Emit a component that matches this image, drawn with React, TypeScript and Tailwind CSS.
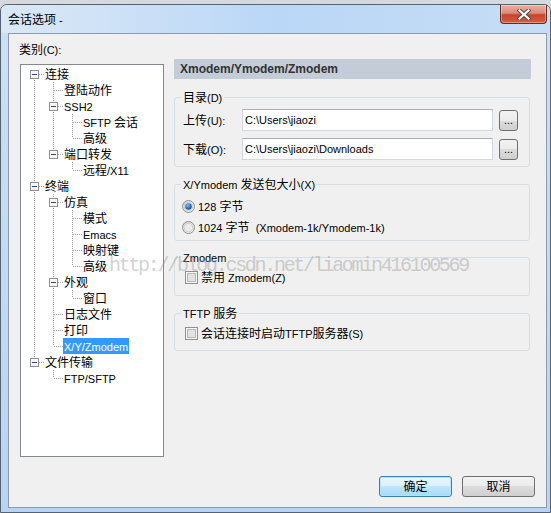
import React from 'react';

type Item = { label: string; depth: number; open?: boolean; selected?: boolean };

const tree: Item[] = [
  { label: '连接', depth: 0, open: true },
  { label: '登陆动作', depth: 1 },
  { label: 'SSH2', depth: 1, open: true },
  { label: 'SFTP 会话', depth: 2 },
  { label: '高级', depth: 2 },
  { label: '端口转发', depth: 1, open: true },
  { label: '远程/X11', depth: 2 },
  { label: '终端', depth: 0, open: true },
  { label: '仿真', depth: 1, open: true },
  { label: '模式', depth: 2 },
  { label: 'Emacs', depth: 2 },
  { label: '映射键', depth: 2 },
  { label: '高级', depth: 2 },
  { label: '外观', depth: 1, open: true },
  { label: '窗口', depth: 2 },
  { label: '日志文件', depth: 1 },
  { label: '打印', depth: 1 },
  { label: 'X/Y/Zmodem', depth: 1, selected: true },
  { label: '文件传输', depth: 0, open: true },
  { label: 'FTP/SFTP', depth: 1 },
];

const hasNext = (i: number) => {
  const d = tree[i].depth;
  for (let j = i + 1; j < tree.length; j++) {
    if (tree[j].depth < d) return false;
    if (tree[j].depth === d) return true;
  }
  return false;
};

// CJK runs at 12px, latin runs a bit smaller like the Windows UI font
const Txt = ({ s }: { s: string }) => (
  <span>
    {s
      .split(/([\u3000-\u9fff\uff00-\uffef]+)/)
      .filter(Boolean)
      .map((p, i) =>
        /[\u3000-\u9fff\uff00-\uffef]/.test(p) ? (
          <span key={i} className="text-[12px]">
            {p}
          </span>
        ) : (
          <span key={i} className="text-[11px]">
            {p}
          </span>
        )
      )}
  </span>
);

type ColProps = { up: boolean; down: boolean; elbow: boolean; box: boolean };

const Col = ({ up, down, elbow, box }: ColProps) => (
  <svg width="19" height="16" className="block shrink-0">
    {up && <line x1="9.5" y1="0" x2="9.5" y2="8" stroke="#a0a0a0" strokeDasharray="1 1" />}
    {down && <line x1="9.5" y1="8" x2="9.5" y2="16" stroke="#a0a0a0" strokeDasharray="1 1" />}
    {elbow && <line x1="10" y1="8.5" x2="19" y2="8.5" stroke="#a0a0a0" strokeDasharray="1 1" />}
    {box && (
      <g>
        <rect x="5.5" y="4.5" width="8" height="8" fill="#f7f7f7" stroke="#919191" />
        <line x1="7" y1="8.5" x2="12" y2="8.5" stroke="#2b4a8a" />
      </g>
    )}
  </svg>
);

const Tree = () => (
  <div className="mt-[6px] w-[144px] h-[393px] border border-[#828790] bg-white pt-[1px] pl-[4px]">
    {tree.map((n, i) => {
      const cols: ColProps[] = [];
      for (let k = 0; k < n.depth; k++) {
        let j = i - 1;
        while (tree[j].depth !== k) j--;
        const cont = hasNext(j);
        cols.push({ up: cont, down: cont, elbow: false, box: false });
      }
      cols.push({ up: i !== 0, down: hasNext(i), elbow: true, box: !!n.open });
      return (
        <div key={i} className="flex h-[16px] items-center">
          {cols.map((c, k) => (
            <Col key={k} {...c} />
          ))}
          <span
            className={
              n.selected
                ? 'h-[16px] px-[1px] leading-[16px] whitespace-nowrap bg-[#3399ff] text-white'
                : 'h-[16px] px-[1px] leading-[16px] whitespace-nowrap'
            }
          >
            <Txt s={n.label} />
          </span>
        </div>
      );
    })}
  </div>
);

const Radio = ({ checked }: { checked?: boolean }) => (
  <svg width="13" height="13" className="block shrink-0">
    <defs>
      <radialGradient id="rdot" cx="40%" cy="35%" r="70%">
        <stop offset="0%" stopColor="#8cc2f0" />
        <stop offset="60%" stopColor="#2e6fb8" />
        <stop offset="100%" stopColor="#1c4f8f" />
      </radialGradient>
      <linearGradient id="rbg" x1="0" y1="0" x2="1" y2="1">
        <stop offset="0%" stopColor="#d6d6d6" />
        <stop offset="100%" stopColor="#fbfbfb" />
      </linearGradient>
    </defs>
    <circle cx="6.5" cy="6.5" r="6" fill="url(#rbg)" stroke="#8e8f8f" />
    <circle cx="6.5" cy="6.5" r="4.3" fill="#ececec" stroke="#c4c4c4" strokeWidth="0.8" />
    {checked && <circle cx="6.5" cy="6.5" r="3.3" fill="url(#rdot)" />}
  </svg>
);

const Check = () => (
  <svg width="13" height="13" className="block shrink-0">
    <rect x="0.5" y="0.5" width="12" height="12" fill="#f6f6f6" stroke="#8e8f8f" />
    <rect x="2.5" y="2.5" width="8" height="8" fill="#e2e2e2" stroke="#b8b8b8" />
  </svg>
);

const PathRow = ({ label, value }: { label: string; value: string }) => (
  <div className="flex items-center">
    <div className="w-[59px] leading-[16px] whitespace-nowrap">
      <Txt s={label} />
    </div>
    <div className="flex h-[22px] w-[251px] items-center border border-[#d3d8de] border-t-[#abadb3] bg-white pl-[2px] text-[11px] whitespace-nowrap">
      {value}
    </div>
    <button className="ml-[6px] flex h-[21px] w-[19px] items-end justify-center rounded-[3px] border border-[#707070] bg-[linear-gradient(#f2f2f2_0%,#ebebeb_50%,#dddddd_50%,#cfcfcf_100%)] pb-[4px] text-[11px] leading-none">
      ...
    </button>
  </div>
);

const Group = ({ title, className, children }: { title: string; className: string; children: React.ReactNode }) => (
  <fieldset className={'rounded-[3px] border border-[#d5dfe5] ' + className}>
    <legend className="ml-[6px] px-[2px] leading-[16px] whitespace-nowrap">
      <Txt s={title} />
    </legend>
    {children}
  </fieldset>
);

export default function App() {
  return (
    <div className="relative h-[513px] w-[551px] overflow-hidden bg-[#d5d8dc] pt-[4px] font-['Liberation_Sans','Noto_Sans_CJK_SC',sans-serif] text-black [text-autospace:no-autospace]">
      <div className="flex h-[509px] flex-col rounded-t-[7px] border border-[#56626f] bg-gradient-to-b from-[#cde0f5] to-[#b8d4f2]">
        {/* title bar */}
        <div className="flex h-[28px] shrink-0 justify-between rounded-t-[6px] bg-gradient-to-r from-[#dbe8f6] via-[#bad7f7] to-[#c6ddf5]">
          <div className="pl-[7px] pt-[6px] leading-[16px]">
            <Txt s="会话选项 -" />
          </div>
          <div className="mr-[3px] flex h-[19px] w-[47px] items-center justify-center rounded-b-[4px] border border-t-0 border-[#6b2a20] bg-[linear-gradient(#eab0a2_0%,#dc8a76_45%,#c8442b_55%,#d4603f_100%)] shadow-[inset_0_0_0_1px_rgba(255,255,255,0.35)]">
            <svg width="14" height="11" viewBox="0 0 14 11">
              <path d="M2.5 1.5 L11.5 9.5 M11.5 1.5 L2.5 9.5" stroke="#4a4a4a" strokeWidth="4" strokeLinecap="square" />
              <path d="M2.5 1.5 L11.5 9.5 M11.5 1.5 L2.5 9.5" stroke="#ffffff" strokeWidth="2.2" strokeLinecap="square" />
            </svg>
          </div>
        </div>

        {/* client area */}
        <div className="ml-[7px] flex h-[475px] w-[539px] flex-col border border-[#8a9bb0] bg-[#f0f0f0] pl-[11px] pt-[7px]">
          <div className="flex">
            <div className="flex flex-col">
              <div className="-ml-[1px] leading-[16px]">
                <Txt s="类别(C):" />
              </div>
              <Tree />
            </div>

            <div className="ml-[10px] mt-[18px] flex w-[357px] flex-col">
              <div className="h-[20px] bg-[#c4cdd7] pl-[6px] text-[12px] font-bold leading-[20px] text-[#333]">
                Xmodem/Ymodem/Zmodem
              </div>

              <Group title="目录(D)" className="mt-[10px] w-[356px]">
                <div className="flex flex-col gap-[7px] pb-[6px] pl-[8px] pr-[11px] pt-[3px]">
                  <PathRow label="上传(U):" value={'C:\\Users\\jiaozi'} />
                  <PathRow label="下载(O):" value={'C:\\Users\\jiaozi\\Downloads'} />
                </div>
              </Group>

              <Group title="X/Ymodem 发送包大小(X)" className="mt-[9px] w-[356px]">
                <div className="flex flex-col gap-[5px] pb-[5px] pl-[7px] pt-[5px]">
                  <div className="flex h-[16px] items-center gap-[3px] leading-[16px]">
                    <Radio checked />
                    <Txt s="128 字节" />
                  </div>
                  <div className="flex h-[16px] items-center gap-[3px] leading-[16px] whitespace-pre">
                    <Radio />
                    <Txt s="1024 字节  (Xmodem-1k/Ymodem-1k)" />
                  </div>
                </div>
              </Group>

              <Group title="Zmodem" className="mt-[8px] w-[356px]">
                <div className="pb-[10px] pl-[10px] pt-[3px]">
                  <div className="flex h-[16px] items-center gap-[3px] leading-[16px]">
                    <Check />
                    <Txt s="禁用 Zmodem(Z)" />
                  </div>
                </div>
              </Group>

              <Group title="TFTP 服务" className="mt-[9px] w-[356px]">
                <div className="pb-[9px] pl-[10px] pt-[3px]">
                  <div className="flex h-[16px] items-center gap-[3px] leading-[16px]">
                    <Check />
                    <Txt s="会话连接时启动TFTP服务器(S)" />
                  </div>
                </div>
              </Group>
            </div>
          </div>

          <div className="mt-[19px] flex justify-end gap-[10px] pr-[11px]">
            <button className="h-[21px] w-[73px] rounded-[3px] border border-[#3c7fb1] bg-[linear-gradient(#eaf6fd_0%,#d9f0fc_50%,#bee6fd_50%,#a7d9f5_100%)] text-[12px] leading-none shadow-[inset_0_0_0_1px_#b6e3f9]">
              确定
            </button>
            <button className="h-[21px] w-[73px] rounded-[3px] border border-[#707070] bg-[linear-gradient(#f2f2f2_0%,#ebebeb_50%,#dddddd_50%,#cfcfcf_100%)] text-[12px] leading-none">
              取消
            </button>
          </div>
        </div>
      </div>

      {/* blog watermark over the screenshot */}
      <div className="pointer-events-none absolute left-[109px] top-[255px] whitespace-nowrap font-['Liberation_Mono',monospace] text-[20px] leading-[22px] tracking-[-2.3px] text-[#8c8c8c]/40">
        http://blog.csdn.net/liaomin416100569
      </div>
    </div>
  );
}
